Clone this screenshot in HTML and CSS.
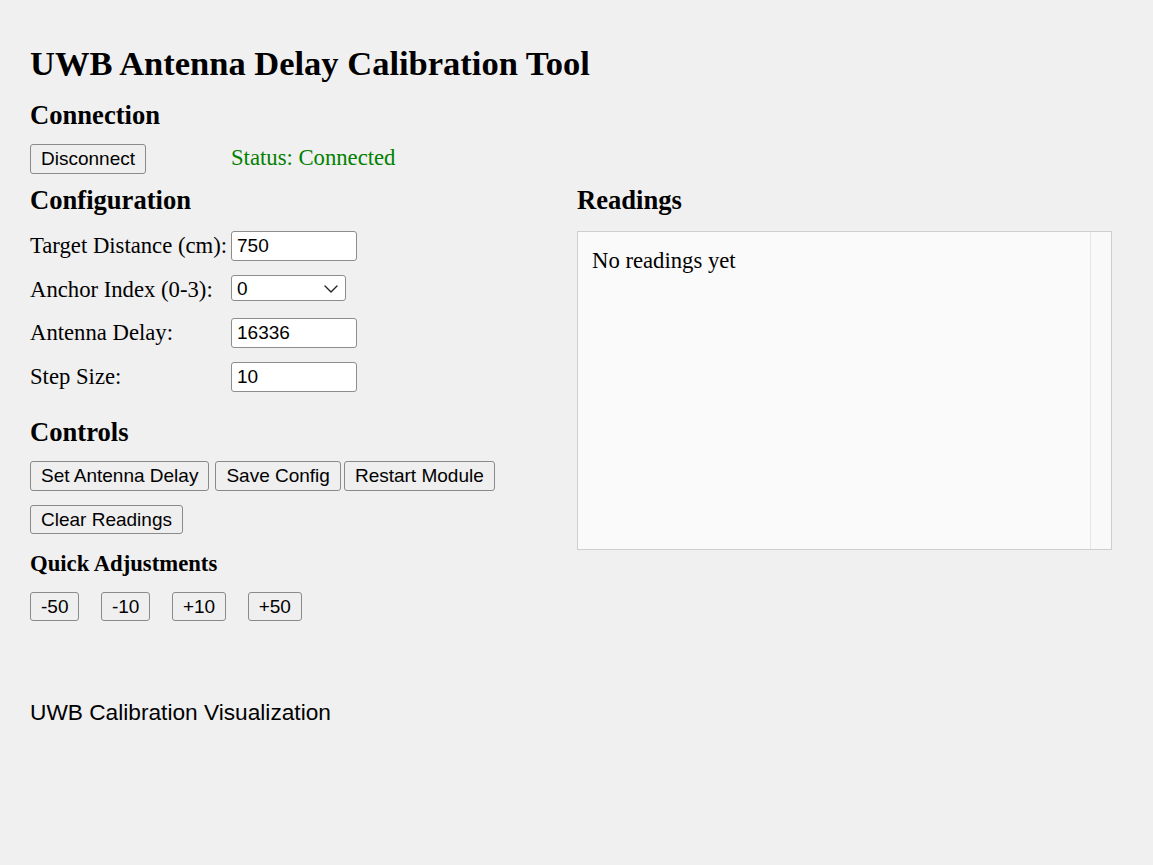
FILE: index.html
```html
<!DOCTYPE html>
<html lang="en">
<head>
<meta charset="utf-8">
<title>UWB Antenna Delay Calibration Tool</title>
<link rel="stylesheet" href="styles.css">
</head>
<body>
  <h1 class="title">UWB Antenna Delay Calibration Tool</h1>

  <section class="connection">
    <h2 class="section-title conn-title">Connection</h2>
    <div class="conn-row">
      <button class="btn">Disconnect</button>
      <span class="status">Status: Connected</span>
    </div>
  </section>

  <div class="layout">
    <div class="left-col">
      <h2 class="section-title config-title">Configuration</h2>
      <div class="form-row">
        <label class="label">Target Distance (cm):</label>
        <input class="field" type="text" value="750">
      </div>
      <div class="form-row">
        <label class="label">Anchor Index (0-3):</label>
        <span class="select-wrap">
          <select class="select">
            <option>0</option>
            <option>1</option>
            <option>2</option>
            <option>3</option>
          </select>
          <svg class="chevron" width="14" height="8" viewBox="0 0 14 8"><path d="M1 1 L7 7 L13 1" fill="none" stroke="#222" stroke-width="1.4" stroke-linecap="round" stroke-linejoin="round"/></svg>
        </span>
      </div>
      <div class="form-row">
        <label class="label">Antenna Delay:</label>
        <input class="field" type="text" value="16336">
      </div>
      <div class="form-row">
        <label class="label">Step Size:</label>
        <input class="field" type="text" value="10">
      </div>

      <h2 class="section-title controls-title">Controls</h2>
      <div class="btn-row">
        <button class="btn">Set Antenna Delay</button>
        <button class="btn btn-save">Save Config</button>
        <button class="btn btn-restart">Restart Module</button>
      </div>
      <div class="btn-row btn-row-2">
        <button class="btn">Clear Readings</button>
      </div>

      <h4 class="sub-title">Quick Adjustments</h4>
      <div class="quick-row">
        <button class="btn">-50</button>
        <button class="btn">-10</button>
        <button class="btn">+10</button>
        <button class="btn">+50</button>
      </div>
    </div>

    <div class="right-col">
      <h2 class="section-title readings-title">Readings</h2>
      <div class="readings-box">
        <div class="readings-content">No readings yet</div>
        <div class="readings-track"></div>
      </div>
    </div>
  </div>

  <div class="viz-title">UWB Calibration Visualization</div>
</body>
</html>
```

FILE: styles.css
```css
html, body {
  margin: 0;
  padding: 0;
}

body {
  background: #f0f0f0;
  color: #000;
  font-family: "Liberation Serif", "Times New Roman", serif;
  font-size: 22.7px;
  padding: 44px 30px 0 30px;
  min-height: 865px;
  box-sizing: border-box;
}

.title {
  font-size: 34.5px;
  line-height: 39px;
  font-weight: bold;
  margin: 0 0 17px 0;
}

.section-title {
  font-size: 26.6px;
  line-height: 31px;
  font-weight: bold;
  margin: 0;
}

.conn-title {
  margin-bottom: 13px;
}

.conn-row {
  display: flex;
  align-items: center;
  height: 30px;
}

.status {
  color: #008000;
  margin-left: 85px;
  line-height: 26px;
  margin-top: -3px;
}

.layout {
  display: grid;
  grid-template-columns: 535px 535px;
  column-gap: 12px;
  margin-top: 11px;
}

.config-title {
  margin-bottom: 15px;
}

.form-row {
  display: flex;
  align-items: center;
  height: 30px;
  margin-bottom: 13.5px;
}

.label {
  width: 201px;
  flex: none;
  line-height: 26px;
  white-space: nowrap;
}

.field {
  box-sizing: border-box;
  width: 126px;
  height: 30px;
  border: 1px solid #8d8d8d;
  border-radius: 3px;
  background: #fff;
  font-family: "Liberation Sans", Arial, sans-serif;
  font-size: 19px;
  padding: 0 5px;
  margin: 0;
  color: #000;
}

.select-wrap {
  position: relative;
  display: block;
  height: 26px;
  margin-top: -3px;
}

.select {
  -webkit-appearance: none;
  appearance: none;
  display: block;
  box-sizing: border-box;
  width: 115px;
  height: 26px;
  border: 1px solid #8d8d8d;
  border-radius: 3px;
  background: #fff;
  font-family: "Liberation Sans", Arial, sans-serif;
  font-size: 19px;
  padding: 0 5px;
  margin: 0;
  color: #000;
}

.chevron {
  position: absolute;
  right: 8px;
  top: 10px;
  pointer-events: none;
}

.controls-title {
  margin-top: 25px;
  margin-bottom: 13.5px;
}

.btn {
  box-sizing: border-box;
  height: 30px;
  padding: 0 10px;
  border: 1px solid #8a8a8a;
  border-radius: 3px;
  background: #efefef;
  font-family: "Liberation Sans", Arial, sans-serif;
  font-size: 19px;
  color: #000;
  margin: 0;
}

.btn-row {
  display: flex;
  height: 30px;
}

.btn-save {
  margin-left: 6px;
}

.btn-restart {
  margin-left: 3px;
}

.btn-row-2 {
  margin-top: 14px;
}

.btn-row-2 .btn {
  height: 29px;
}

.sub-title {
  font-size: 22.7px;
  line-height: 26px;
  font-weight: bold;
  margin: 16px 0 15px 0;
}

.quick-row {
  display: flex;
  gap: 21.5px;
}

.quick-row .btn {
  height: 29px;
}

.readings-title {
  margin-bottom: 14.5px;
}

.readings-box {
  box-sizing: border-box;
  display: flex;
  height: 319px;
  border: 1px solid #cfcfcf;
  background: #fafafa;
}

.readings-content {
  flex: 1;
  padding: 16px 14px;
  line-height: 26px;
}

.readings-track {
  width: 20px;
  border-left: 1px solid #e6e6e6;
  background: #f9f9f9;
}

.viz-title {
  font-family: "Liberation Sans", Arial, sans-serif;
  font-size: 22.7px;
  line-height: 26px;
  margin-top: 78px;
}
```
